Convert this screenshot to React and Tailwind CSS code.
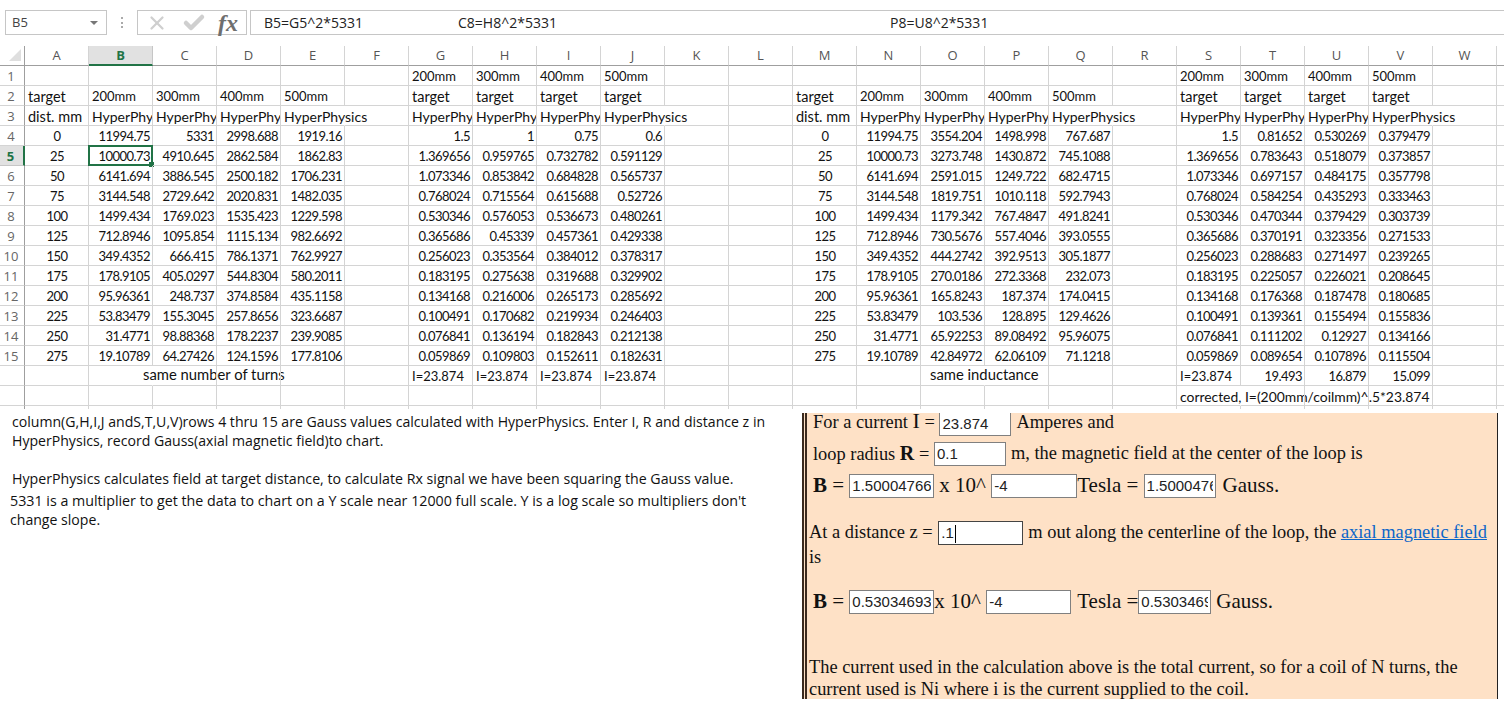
import { X, Check } from 'lucide-react';

const cols = ['A', 'B', 'C', 'D', 'E', 'F', 'G', 'H', 'I', 'J', 'K', 'L', 'M', 'N', 'O', 'P', 'Q', 'R', 'S', 'T', 'U', 'V', 'W'];

const hp = 'HyperPhysics';

// text rows 1-3
const headRows = [
    ['', '', '', '', '', '', '200mm', '300mm', '400mm', '500mm', '', '', '', '', '', '', '', '', '200mm', '300mm', '400mm', '500mm', ''],
    ['target', '200mm', '300mm', '400mm', '500mm', '', 'target', 'target', 'target', 'target', '', '', 'target', '200mm', '300mm', '400mm', '500mm', '', 'target', 'target', 'target', 'target', ''],
    ['dist. mm', hp, hp, hp, hp, '', hp, hp, hp, hp, '', '', 'dist. mm', hp, hp, hp, hp, '', hp, hp, hp, hp, ''],
];

// rows 4-15: dist, B-E, G-J, N-Q, S-V
const dataRows = [
    ['0', '11994.75', '5331', '2998.688', '1919.16', '1.5', '1', '0.75', '0.6', '11994.75', '3554.204', '1498.998', '767.687', '1.5', '0.81652', '0.530269', '0.379479'],
    ['25', '10000.73', '4910.645', '2862.584', '1862.83', '1.369656', '0.959765', '0.732782', '0.591129', '10000.73', '3273.748', '1430.872', '745.1088', '1.369656', '0.783643', '0.518079', '0.373857'],
    ['50', '6141.694', '3886.545', '2500.182', '1706.231', '1.073346', '0.853842', '0.684828', '0.565737', '6141.694', '2591.015', '1249.722', '682.4715', '1.073346', '0.697157', '0.484175', '0.357798'],
    ['75', '3144.548', '2729.642', '2020.831', '1482.035', '0.768024', '0.715564', '0.615688', '0.52726', '3144.548', '1819.751', '1010.118', '592.7943', '0.768024', '0.584254', '0.435293', '0.333463'],
    ['100', '1499.434', '1769.023', '1535.423', '1229.598', '0.530346', '0.576053', '0.536673', '0.480261', '1499.434', '1179.342', '767.4847', '491.8241', '0.530346', '0.470344', '0.379429', '0.303739'],
    ['125', '712.8946', '1095.854', '1115.134', '982.6692', '0.365686', '0.45339', '0.457361', '0.429338', '712.8946', '730.5676', '557.4046', '393.0555', '0.365686', '0.370191', '0.323356', '0.271533'],
    ['150', '349.4352', '666.415', '786.1371', '762.9927', '0.256023', '0.353564', '0.384012', '0.378317', '349.4352', '444.2742', '392.9513', '305.1877', '0.256023', '0.288683', '0.271497', '0.239265'],
    ['175', '178.9105', '405.0297', '544.8304', '580.2011', '0.183195', '0.275638', '0.319688', '0.329902', '178.9105', '270.0186', '272.3368', '232.073', '0.183195', '0.225057', '0.226021', '0.208645'],
    ['200', '95.96361', '248.737', '374.8584', '435.1158', '0.134168', '0.216006', '0.265173', '0.285692', '95.96361', '165.8243', '187.374', '174.0415', '0.134168', '0.176368', '0.187478', '0.180685'],
    ['225', '53.83479', '155.3045', '257.8656', '323.6687', '0.100491', '0.170682', '0.219934', '0.246403', '53.83479', '103.536', '128.895', '129.4626', '0.100491', '0.139361', '0.155494', '0.155836'],
    ['250', '31.4771', '98.88368', '178.2237', '239.9085', '0.076841', '0.136194', '0.182843', '0.212138', '31.4771', '65.92253', '89.08492', '95.96075', '0.076841', '0.111202', '0.12927', '0.134166'],
    ['275', '19.10789', '64.27426', '124.1596', '177.8106', '0.059869', '0.109803', '0.152611', '0.182631', '19.10789', '42.84972', '62.06109', '71.1218', '0.059869', '0.089654', '0.107896', '0.115504'],
];

const toCells = (d) => [d[0], d[1], d[2], d[3], d[4], '', d[5], d[6], d[7], d[8], '', '', d[0], d[9], d[10], d[11], d[12], '', d[13], d[14], d[15], d[16], ''];

// Lato digits run wider than the sheet's, its letters narrower
const sizeFor = (text) => {
    if (text === hp) return 'text-[14px]';
    if (text === 'target' || text === 'dist. mm') return 'text-[14.5px]';
    if (/^[\d.]+$/.test(text)) return 'text-[13px] tracking-[-0.55px]';
    return 'text-[13px]';
};

function Cell({ children, text = '', align = 'left', spill = false, selected = false }) {
    return (
        <div
            className={`relative h-5 border-r border-b border-[#d4d4d4] pl-[3px] pr-[2px] font-['Lato',sans-serif] leading-[21px] text-[#111] whitespace-nowrap ${sizeFor(text)}
                ${spill ? 'overflow-visible border-r-transparent' : 'overflow-hidden'}
                ${selected ? 'overflow-visible!' : ''}
                ${align === 'right' ? 'text-right' : align === 'center' ? 'text-center' : 'text-left'}`}
        >
            {text}
            {children}
            {selected && (
                <div className="absolute -left-px -top-px h-[21px] w-[65px] border-2 border-[#217346]">
                    <div className="absolute -bottom-[3px] -right-[3px] h-[5px] w-[5px] bg-[#217346]" />
                </div>
            )}
        </div>
    );
}

function RowHead({ n, active }) {
    return (
        <div
            className={`h-5 border-b pr-[2px] text-center font-['Open_Sans',sans-serif] text-[13px] leading-[20px]
                ${active ? 'border-[#c6c6c6] border-r-2 border-r-[#217346] bg-[#e1e1e1] font-bold text-[#217346]' : 'border-[#d4d4d4] border-r border-r-[#9f9f9f] text-[#666]'}`}
        >
            {n}
        </div>
    );
}

function HeaderBar() {
    return (
        <div className="flex h-[46px] items-start pt-[10px] font-['Open_Sans',sans-serif] text-[14px] text-[#222]">
            <div className="ml-[5px] flex h-[25px] w-[102px] items-center justify-between border border-[#c6c6c6] pl-[6px] pr-2 text-[13px] text-[#444]">
                <span>B5</span>
                <span className="h-0 w-0 border-x-[4px] border-t-[4px] border-x-transparent border-t-[#777]" />
            </div>
            <div className="ml-[14px] mt-[7px] flex h-[11px] w-[4px] flex-col justify-between">
                <span className="h-[2px] w-[2px] bg-[#aaa]" />
                <span className="h-[2px] w-[2px] bg-[#aaa]" />
                <span className="h-[2px] w-[2px] bg-[#aaa]" />
            </div>
            <div className="ml-[12px] flex h-[25px] w-[110px] items-center border border-[#c6c6c6] pl-2">
                <X size={22} strokeWidth={2.5} className="text-[#cfcfcf]" />
                <Check size={24} strokeWidth={4.5} className="ml-[14px] text-[#cfcfcf]" />
                <span className="ml-[12px] font-['Liberation_Serif',serif] text-[24px] font-bold italic leading-none text-[#6f6f6f]">fx</span>
            </div>
            <div className="ml-[3px] flex h-[25px] flex-1 items-center border-y border-l border-[#c6c6c6] pl-[13px]">
                <span className="w-[194px]">B5=G5^2*5331</span>
                <span className="w-[432px]">C8=H8^2*5331</span>
                <span>P8=U8^2*5331</span>
            </div>
        </div>
    );
}

function Row({ cells, n, align }) {
    return (
        <>
            <RowHead n={n} active={n === 5} />
            {cells.map((text, i) => (
                <Cell
                    key={i}
                    text={text}
                    align={align(i)}
                    spill={text === hp && cells[i + 1] === ''}
                    selected={n === 5 && i === 1}
                />
            ))}
            <div className="h-5 border-b border-[#d4d4d4]" />
        </>
    );
}

function Sheet() {
    return (
        <div className="grid grid-cols-[25px_repeat(23,64px)_7px]">
            <div className="flex h-5 items-end justify-end border-r border-b border-[#9f9f9f] pb-1 pr-[3px]">
                <svg width="12" height="12" viewBox="0 0 12 12">
                    <polygon points="12,0 12,12 0,12" fill="#dfdfdf" />
                </svg>
            </div>
            {cols.map((c) => (
                <div
                    key={c}
                    className={`h-5 border-r text-center font-['Open_Sans',sans-serif] text-[13px] leading-[19px]
                        ${c === 'B' ? 'border-b-2 border-r-[#c6c6c6] border-b-[#217346] bg-[#e1e1e1] font-bold text-[#217346]' : 'border-b border-r-[#d4d4d4] border-b-[#9f9f9f] text-[#555]'}`}
                >
                    {c}
                </div>
            ))}
            <div className="h-5 border-b border-[#9f9f9f]" />

            {headRows.map((cells, r) => (
                <Row key={r} cells={cells} n={r + 1} align={() => 'left'} />
            ))}
            {dataRows.map((d, r) => (
                <Row
                    key={r}
                    cells={toCells(d)}
                    n={r + 4}
                    align={(i) => (i === 0 || i === 12 ? 'center' : 'right')}
                />
            ))}

            {/* row 16 */}
            <RowHead n="" />
            <Cell />
            <Cell spill><span className="relative -top-[2px] ml-[51px] text-[14.8px]">same number of turns</span></Cell>
            <Cell /><Cell /><Cell /><Cell />
            <Cell text="I=23.874" /><Cell text="I=23.874" /><Cell text="I=23.874" /><Cell text="I=23.874" />
            <Cell /><Cell /><Cell /><Cell />
            <Cell spill><span className="relative -top-[2px] ml-[6px] text-[14.8px]">same inductance</span></Cell>
            <Cell /><Cell /><Cell />
            <Cell text="I=23.874" />
            <Cell align="right" text="19.493" /><Cell align="right" text="16.879" /><Cell align="right" text="15.099" />
            <Cell />
            <div className="h-5 border-b border-[#d4d4d4]" />

            {/* row 17 */}
            <RowHead n="" />
            {cols.map((c) =>
                c === 'S' ? (
                    <Cell key={c} spill><span className="text-[13.9px]">corrected, I=(200mm/coilmm)^.5*23.874</span></Cell>
                ) : (
                    <Cell key={c} />
                ),
            )}
            <div className="h-5 border-b border-[#d4d4d4]" />

            {/* stubs under the last row */}
            <div className="h-[3px] border-r border-[#9f9f9f]" />
            {cols.map((c) => (
                <div key={c} className="h-[3px] border-r border-[#d4d4d4]" />
            ))}
            <div className="h-[3px]" />
        </div>
    );
}

function Box({ value, w, dark, caret }) {
    return (
        <span className={`inline-block h-[24px] shrink-0 border bg-white px-[2px] font-['Liberation_Sans',sans-serif] text-[15px] leading-[21px] text-[#222] ${w} ${dark ? 'border-[#444]' : 'border-[#808080]'}`}>
            <span className="block overflow-hidden whitespace-nowrap">
                {value}
                {caret && <span className="ml-px inline-block h-[18px] w-px bg-black align-middle" />}
            </span>
        </span>
    );
}

function Panel() {
    return (
        <div className="ml-[802px] flex h-[286px] w-[696px] flex-col overflow-hidden border-l-[5px] border-r border-double border-r-[#222] border-l-[#3b2a1e] bg-[#fee1c6] font-['Liberation_Serif',serif] text-[18.4px] text-[#111]">
            <div className="flex h-[22px] items-start pl-[6px]">
                <span className="leading-[18px]">For a current <span className="text-[22px] leading-[0]">I</span> =&nbsp;</span>
                <span className="-mt-px flex"><Box value="23.874" w="w-[72px]" /></span>
                <span className="ml-[5px] leading-[18px]">Amperes and</span>
            </div>
            <div className="mt-[6px] flex h-[25px] items-center pl-[6px]">
                <span>loop radius <b className="text-[20px]">R</b> =&nbsp;</span>
                <Box value="0.1" w="w-[72px]" />
                <span className="ml-[5px]">m, the magnetic field at the center of the loop is</span>
            </div>
            <div className="mt-[7px] flex h-[25px] items-center pl-[6px] text-[21px]">
                <span><b>B</b> =&nbsp;</span>
                <Box value="1.500047664" w="w-[85px]" />
                <span className="ml-[5px]">x 10^&nbsp;</span>
                <Box value="-4" w="w-[86px]" />
                <span>Tesla =&nbsp;</span>
                <Box value="1.50004766" w="w-[72px]" />
                <span className="ml-[7px]">Gauss.</span>
            </div>
            <div className="mt-[22px] flex h-[25px] items-center pl-[2px]">
                <span>At a distance z =&nbsp;</span>
                <span className="ml-px flex"><Box value=".1" w="w-[85px]" dark caret /></span>
                <span className="ml-[5px]">m out along the centerline of the loop, the&nbsp;</span>
                <a className="text-[#0b66c8] underline">axial magnetic field</a>
            </div>
            <div className="h-[24px] pl-[2px] leading-[24px]">is</div>
            <div className="mt-[20px] flex h-[25px] items-center pl-[6px] text-[21px]">
                <span><b>B</b> =&nbsp;</span>
                <Box value="0.530346930" w="w-[85px]" />
                <span>x 10^&nbsp;</span>
                <Box value="-4" w="w-[85px]" />
                <span className="ml-[6px]">Tesla =</span>
                <Box value="0.53034693" w="w-[73px]" />
                <span className="ml-[5px]">Gauss.</span>
            </div>
            <div className="mt-[42px] pl-[2px] leading-[22px]">
                The current used in the calculation above is the total current, so for a coil of N turns, the
                <br />
                current used is Ni where i is the current supplied to the coil.
            </div>
        </div>
    );
}

export default function App() {
    return (
        <div className="relative h-[705px] w-[1504px] overflow-hidden bg-white">
            <HeaderBar />
            <Sheet />
            <div className="mt-[4px]">
                <Panel />
            </div>
            {/* note pasted over the sheet, next to the calculator */}
            <div className="absolute left-[12px] top-[412px] w-[785px] font-['Open_Sans',sans-serif] text-[14.1px] leading-[19px] text-[#111]">
                <p>column(G,H,I,J andS,T,U,V)rows 4 thru 15 are Gauss values calculated with HyperPhysics. Enter I, R and distance z in</p>
                <p>HyperPhysics, record Gauss(axial magnetic field)to chart.</p>
                <p className="mt-[19px] text-[14.2px]">HyperPhysics calculates field at target distance, to calculate Rx signal we have been squaring the Gauss value.</p>
                <p className="-ml-[2px] mt-[3px] text-[14.25px]">5331 is a multiplier to get the data to chart on a Y scale near 12000 full scale. Y is a log scale so multipliers don't</p>
                <p className="-ml-[2px]">change slope.</p>
            </div>
        </div>
    );
}
